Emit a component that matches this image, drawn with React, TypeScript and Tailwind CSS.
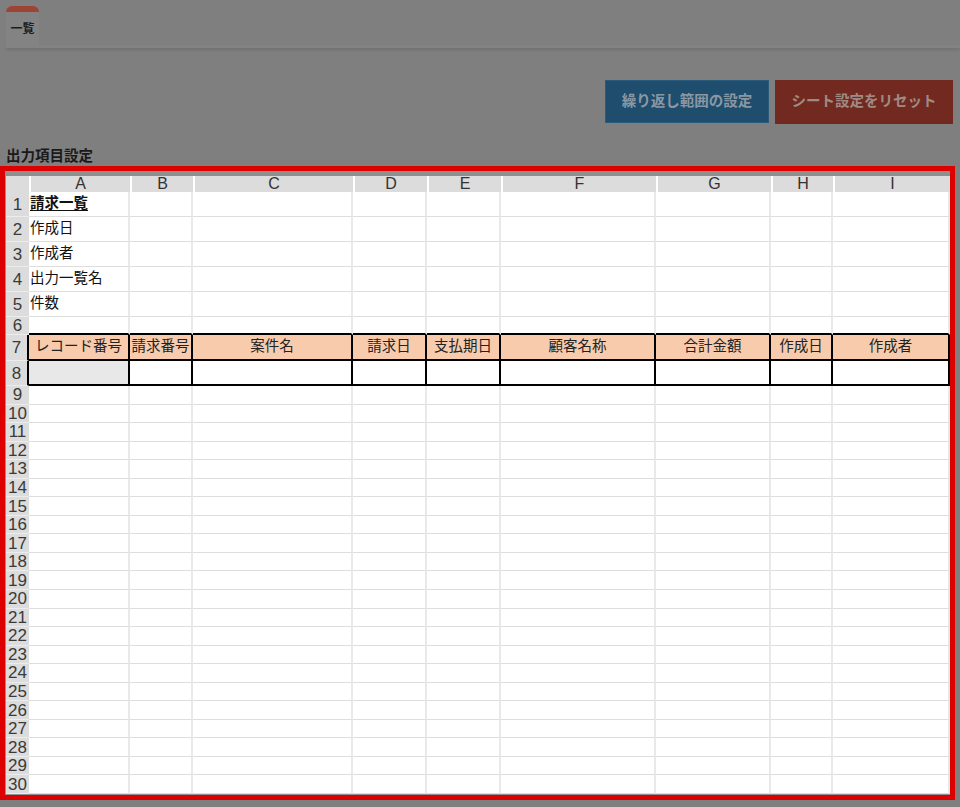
import React from "react";

const widths = [
  "w-[23px]",
  "w-[101px]",
  "w-[63px]",
  "w-[160px]",
  "w-[74px]",
  "w-[74px]",
  "w-[155px]",
  "w-[115px]",
  "w-[62px]",
  "w-[117px]",
];

const letters = ["A", "B", "C", "D", "E", "F", "G", "H", "I"];
const headers7 = [
  "レコード番号",
  "請求番号",
  "案件名",
  "請求日",
  "支払期日",
  "顧客名称",
  "合計金額",
  "作成日",
  "作成者",
];

type Row = { n: number; h: string; a?: string; bold?: boolean };

const rows: Row[] = [
  { n: 1, h: "h-[25px]", a: "請求一覧", bold: true },
  { n: 2, h: "h-[25px]", a: "作成日" },
  { n: 3, h: "h-[25px]", a: "作成者" },
  { n: 4, h: "h-[25px]", a: "出力一覧名" },
  { n: 5, h: "h-[25px]", a: "件数" },
  { n: 6, h: "h-[18px]" },
  { n: 7, h: "h-[26px]" },
  { n: 8, h: "h-[25px]" },
];
for (let i = 9; i <= 30; i++) rows.push({ n: i, h: "h-[18.55px]" });

const sans = "font-['Liberation_Sans','Noto_Sans_CJK_JP',sans-serif]";

function SheetRow({ r }: { r: Row }) {
  const thick = r.n === 7 || r.n === 8;
  return (
    <div className={`flex ${r.h}`}>
      <div
        className={`${widths[0]} shrink-0 bg-[#dcdcdc] border-b border-[#ececec] flex items-center justify-center text-[17px] leading-none text-[#3a3a3a] ${
          thick ? "border-r-2 border-r-black" : ""
        }`}
      >
        {r.n}
      </div>
      {letters.map((_, ci) => {
        const w = widths[ci + 1];
        if (r.n === 7) {
          return (
            <div
              key={ci}
              className={`${w} shrink-0 bg-[#f8cbad] border-r-2 border-b-2 border-black flex items-center justify-center text-[14.5px] text-[#222] whitespace-nowrap overflow-hidden`}
            >
              {headers7[ci]}
            </div>
          );
        }
        if (r.n === 8) {
          return (
            <div
              key={ci}
              className={`${w} shrink-0 ${
                ci === 0 ? "bg-[#e8e8e8]" : "bg-white"
              } border-r-2 border-b-2 border-black`}
            />
          );
        }
        const bottom =
          r.n === 6 ? "border-b-2 border-b-black" : "border-b border-b-[#dedede]";
        return (
          <div
            key={ci}
            className={`${w} shrink-0 bg-white border-r-2 border-r-[#e9e9e9] ${bottom} flex items-center pl-[1px] text-[14.5px] text-[#111] whitespace-nowrap overflow-visible`}
          >
            {ci === 0 && r.a ? (
              <span className={r.bold ? "font-bold underline underline-offset-2" : ""}>
                {r.a}
              </span>
            ) : null}
          </div>
        );
      })}
    </div>
  );
}

export default function App() {
  return (
    <div className={`w-[960px] h-[807px] bg-[#7f7f7f] ${sans} overflow-hidden`}>
      {/* tab bar */}
      <div className="pt-[6px] pl-[6px]">
        <div className="flex">
          <div className="w-[33px] flex flex-col">
            <div className="h-[6px] rounded-t-[6px] bg-[#9c4535]" />
            <div className="h-[33px] bg-[#838383] flex items-center justify-center text-[12px] font-bold text-[#1c1c1c]">
              一覧
            </div>
          </div>
          <div className="flex-1 h-[39px] bg-[#7f7f7f]" />
        </div>
        <div className="h-[3px] bg-[#838383] shadow-[0_2px_3px_rgba(0,0,0,0.12)]" />
      </div>

      {/* buttons */}
      <div className="mt-[32px] flex justify-end items-start gap-[6px] pr-[7px]">
        <div className="w-[164px] h-[43px] bg-[#1f4d6d] border border-[#2b5b7c] flex items-center justify-center text-[14.5px] font-bold text-[#8a98a4]">
          繰り返し範囲の設定
        </div>
        <div className="w-[178px] h-[44px] bg-[#722920] flex items-center justify-center text-[14.5px] font-bold text-[#a08a86]">
          シート設定をリセット
        </div>
      </div>

      {/* label */}
      <div className="mt-[23px] h-[19px] pl-[6px] flex items-center text-[14.5px] font-bold text-[#1a1a1a]">
        出力項目設定
      </div>

      {/* sheet */}
      <div className="w-[955px] border-[5px] border-[#dc0000]">
        <div className="bg-[#8f8f8f] pt-[5px] pl-[1px] pr-[1px] pb-[1px]">
          <div className="bg-white">
            <div className="flex h-[16px]">
              <div className={`${widths[0]} shrink-0 bg-[#dcdcdc]`} />
              {letters.map((l, i) => (
                <div
                  key={l}
                  className={`${widths[i + 1]} shrink-0 bg-[#dcdcdc] border-l-2 border-white flex items-center justify-center text-[16px] text-[#333] leading-none`}
                >
                  {l}
                </div>
              ))}
            </div>
            {rows.map((r) => (
              <SheetRow key={r.n} r={r} />
            ))}
          </div>
        </div>
      </div>
    </div>
  );
}
